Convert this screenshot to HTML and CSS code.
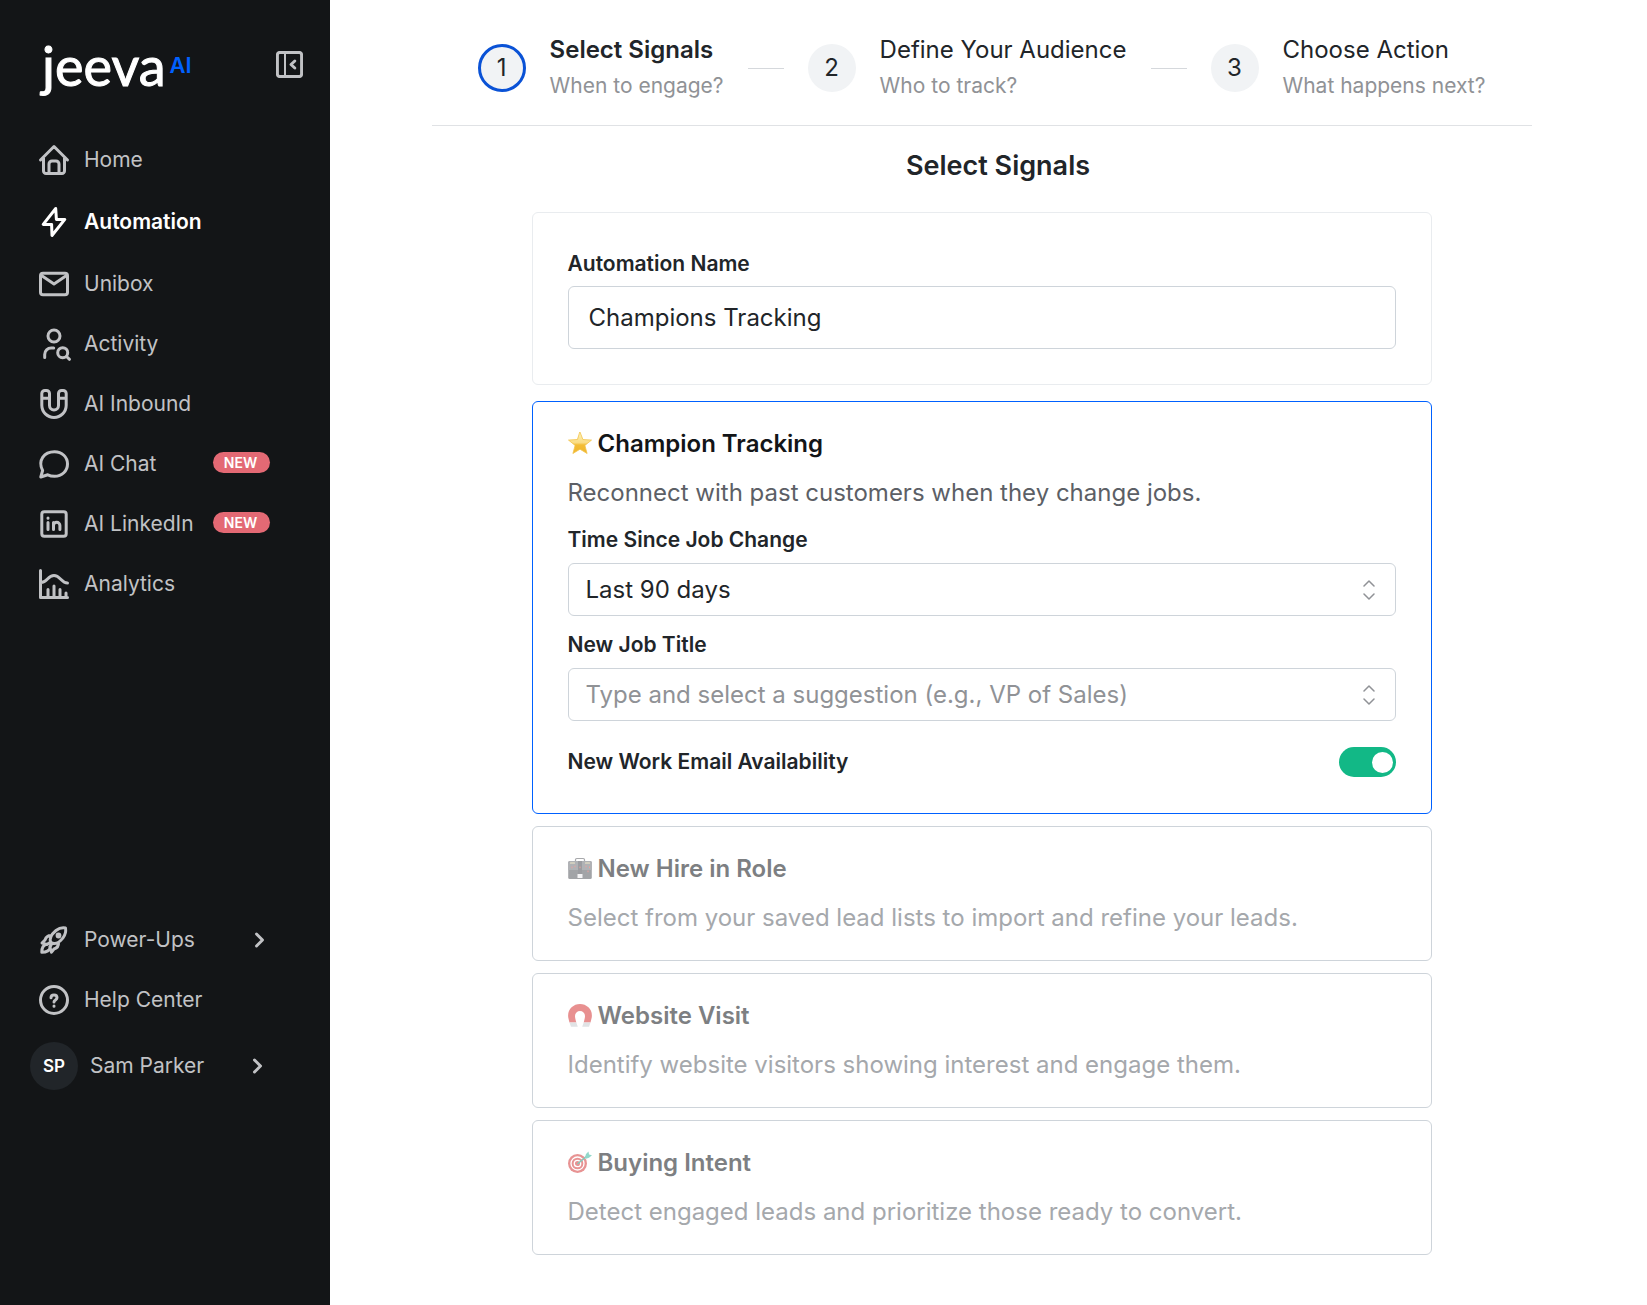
FILE: index.html
```html
<!DOCTYPE html>
<html lang="en">
<head>
	<meta charset="UTF-8">
	<meta name="viewport" content="width=device-width,initial-scale=1.0">
	<title>Jeeva AI - Automation</title>
	<link rel="stylesheet" href="styles.css">
</head>
<body>
	<div class="app">
		<aside class="sidebar">
			<header class="side-head">
				<a href="#" class="logo">jeeva<sup>AI</sup></a>
				<button type="button" class="collapse" aria-label="Collapse sidebar">
					<svg viewBox="0 0 27 27" width="27" height="27"><rect x="1.4" y="1.4" width="24.2" height="24.2" rx="2.5"/><path d="M9 2v23" stroke-width="2"/><path d="M18.8 10l-3.8 3.5 3.8 3.5"/></svg>
				</button>
			</header>
			<nav class="menu">
				<a href="#">
					<svg viewBox="0 0 30 30"><path d="M1.5 15L15 1.5 28.5 15M4.5 13v13A2.5 2.5 0 0 0 7 28.5h16a2.5 2.5 0 0 0 2.5-2.5V13M10 28V19a3 3 0 0 1 3-3h4a3 3 0 0 1 3 3v9"/></svg>
					<span>Home</span>
				</a>
				<a href="#" class="active">
					<svg viewBox="0 0 30 30"><path d="M16.7 1.5L4.2 17.4h8.4L13 28.5 25.8 12.4h-8.4z"/></svg>
					<span>Automation</span>
				</a>
				<a href="#">
					<svg viewBox="0 0 30 30"><rect x="1.5" y="4.2" width="27" height="21.6" rx="2.5"/><path d="M2.5 6.5L15 15l12.5-8.5"/></svg>
					<span>Unibox</span>
				</a>
				<a href="#">
					<svg viewBox="0 0 30 30"><circle cx="15" cy="7" r="6"/><path d="M5.7 28.5v-3a6.5 6.5 0 0 1 6.5-6.5h2.5M27.5 27.5l3 2.8"/><circle cx="23.7" cy="23.7" r="5"/></svg>
					<span>Activity</span>
				</a>
				<a href="#">
					<svg viewBox="0 0 30 30"><path d="M2.8 4.5a3 3 0 0 1 3-3h1.7a3 3 0 0 1 3 3v12a4.5 4.5 0 0 0 9 0v-12a3 3 0 0 1 3-3h1.7a3 3 0 0 1 3 3v11.800a12.200 12.200 0 0 1-24.400 0zM2.800 9.200h7.700M19.500 9.200h7.700"/></svg>
					<span>AI Inbound</span>
				</a>
				<a href="#">
					<svg viewBox="0 0 30 30"><path d="M1.800 28l1.800-6.500C-1.500 11.500 5 2.800 15.500 2.800c7.500 0 13 5.200 13 12.200s-5.500 12.200-13 12.200c-2.500 0-4.800-.5-6.700-1.400z"/></svg>
					<span>AI Chat</span>
					<em class="badge">NEW</em>
				</a>
				<a href="#">
					<svg viewBox="0 0 30 30"><rect x="2.8" y="2.8" width="24.4" height="24.4" rx="2.5"/><path d="M9 13.500v7M9 9v.2M14.500 20.500v-7M14.500 16.500a3.200 3.200 0 0 1 6.400 0v4"/></svg>
					<span>AI LinkedIn</span>
					<em class="badge">NEW</em>
				</a>
				<a href="#">
					<svg viewBox="0 0 30 30"><path d="M1.500 1.500v27h27M2 13.500c6.500 0 6.500-7 13-7s7 7.500 13.500 7.500M9 28v-7.500M15 28V17M21 28v-7.500M27 28v-4"/></svg>
					<span>Analytics</span>
				</a>
			</nav>
			<nav class="menu menu-bottom">
				<a href="#">
					<svg viewBox="0 0 30 30"><path d="M12 17.500C9.500 13 14 8 17 5.500c3-2.300 7-3 9.500-2.500.5 3-.2 6.800-2.500 9.800-2.500 3.200-7.500 7.700-12 4.700zM12.500 10.500c-4-.3-5.500 1.500-6.500 4.500L3 18l5 1.500M19.500 17.500c.3 4-1.500 5.500-4.500 6.500l-2.500 3.200L10.800 22M7.500 19.200c-3.200.8-4.700 3.300-4.700 8 4.700 0 7.700-1.700 8.500-4.900M11 17.500l-3 2M12.500 19l-1.500 3"/><circle cx="19.5" cy="10.5" r="1.4"/></svg>
					<span>Power-Ups</span>
					<svg class="chevron" viewBox="0 0 12 18"><path d="M2.500 3l6 6-6 6"/></svg>
				</a>
				<a href="#">
					<svg viewBox="0 0 30 30"><circle cx="15" cy="15" r="13.5"/><path d="M12 12.800c0-3.700 6-3.700 6 0 0 2.200-3 2-3 4.200M15 21v.3"/></svg>
					<span>Help Center</span>
				</a>
				<a href="#" class="user">
					<b class="avatar">SP</b>
					<span>Sam Parker</span>
					<svg class="chevron" viewBox="0 0 12 18"><path d="M2.500 3l6 6-6 6"/></svg>
				</a>
			</nav>
		</aside>

		<main class="main">
			<ol class="steps">
				<li class="step current">
					<span class="num">1</span>
					<div><strong>Select Signals</strong><small>When to engage?</small></div>
				</li>
				<li class="step">
					<span class="num">2</span>
					<div><strong>Define Your Audience</strong><small>Who to track?</small></div>
				</li>
				<li class="step">
					<span class="num">3</span>
					<div><strong>Choose Action</strong><small>What happens next?</small></div>
				</li>
			</ol>

			<form class="signals">
				<h1>Select Signals</h1>

				<section class="card name-card">
					<label for="name">Automation Name</label>
					<input type="text" id="name" class="name-input" value="Champions Tracking">
				</section>

				<section class="card signal selected">
					<h2>
						<svg viewBox="0 0 24 24">
							<defs><linearGradient id="gold" x1="0" y1="0" x2="0" y2="1"><stop offset="0" stop-color="#fff3b8"/><stop offset=".5" stop-color="#f9dc84"/><stop offset=".6" stop-color="#f3bd36"/><stop offset="1" stop-color="#f0b52d"/></linearGradient></defs>
							<path d="M12 0l2.900 7.500 8.600.6-6.600 5.300 2.200 8.100L12 17.200l-7.100 4.300 2.200-8.100L.5 8.100l8.600-.6z" fill="url(#gold)" stroke="#f2c44c" stroke-width=".8"/>
						</svg>
						Champion Tracking
					</h2>
					<p>Reconnect with past customers when they change jobs.</p>
					<div class="field">
						<label for="since">Time Since Job Change</label>
						<div class="select">
							<select id="since">
								<option>Last 30 days</option>
								<option selected>Last 90 days</option>
							</select>
							<svg viewBox="0 0 12 20"><path d="M1 6l5-5 5 5M1 14l5 5 5-5"/></svg>
						</div>
					</div>
					<div class="field">
						<label for="title">New Job Title</label>
						<div class="select">
							<input type="text" id="title" placeholder="Type and select a suggestion (e.g., VP of Sales)">
							<svg viewBox="0 0 12 20"><path d="M1 6l5-5 5 5M1 14l5 5 5-5"/></svg>
						</div>
					</div>
					<div class="toggle-row">
						<label for="email">New Work Email Availability</label>
						<input type="checkbox" id="email" class="toggle" checked>
					</div>
				</section>

				<section class="card signal muted">
					<h2>
						<svg viewBox="0 0 24 24">
							<path d="M7.500 4.500V2.800c0-.8.5-1.300 1.300-1.300h6.400c.8 0 1.300.5 1.300 1.300v1.700" fill="none" stroke="#6d6f75" stroke-width="1.200"/>
							<rect x=".2" y="4" width="23.600" height="18" rx="1.500" fill="#66686e"/>
							<path d="M.2 5.500A1.500 1.500 0 0 1 1.700 4h20.600a1.500 1.500 0 0 1 1.500 1.500V13H.2z" fill="#7d7f85"/>
							<path d="M10 4h4v13h-4z" fill="#5b5d63"/>
							<path d="M9.500 17h5v4h-5z" fill="#ececee"/>
							<path d="M2.500 6h4M17.500 6h4" stroke="#e6d9a5" stroke-width="1.200"/>
							<path d="M4 10v.8M18 9v.8M20 14v.8M7 9v.8M12 10v.8M21.500 10v.8" stroke="#e0655c" stroke-width="1"/>
						</svg>
						New Hire in Role
					</h2>
					<p>Select from your saved lead lists to import and refine your leads.</p>
				</section>

				<section class="card signal muted">
					<h2>
						<svg viewBox="0 0 24 24">
							<path d="M1.500 18.500C.7 15 .1 14 .1 11.500a11.900 11.500 0 0 1 23.800 0c0 2.500-.6 3.500-1.400 7h-6.800c.6-2.500 1.300-4.500 1.300-6.500a5 5 0 0 0-10 0c0 2 .7 4 1.300 6.500z" fill="#d94848"/>
							<path d="M1.500 18.500h6.800l1.500 4.300H3zM22.500 18.500h-6.800l-1.500 4.300H21z" fill="#cdd1d5"/>
						</svg>
						Website Visit
					</h2>
					<p>Identify website visitors showing interest and engage them.</p>
				</section>

				<section class="card signal muted">
					<h2>
						<svg viewBox="0 0 24 24">
							<circle cx="9.5" cy="12.500" r="9.5" fill="#d94d4d"/>
							<circle cx="9.5" cy="12.500" r="6.500" fill="none" stroke="#fff" stroke-width="1.300"/>
							<circle cx="9.5" cy="12.500" r="3.200" fill="none" stroke="#fff" stroke-width="1.300"/>
							<path d="M10 12.500l9-7.500" stroke="#35a58e" stroke-width="1.600"/>
							<path d="M17 6.500l1-3.500 2.500-2.500.5 3 3 .7-3 2.600-3 .9z" fill="#4bbfa7"/>
						</svg>
						Buying Intent
					</h2>
					<p>Detect engaged leads and prioritize those ready to convert.</p>
				</section>
			</form>
		</main>
	</div>
</body>
</html>
```

FILE: styles.css
```css
*{margin: 0; padding: 0; box-sizing: border-box;}
body{font-family: Inter, "Liberation Sans", sans-serif; font-size: 24px; line-height: 36px; color: #212529; background: #fff;}
a{text-decoration: none; color: inherit;}
input, select, button{font: inherit; color: inherit;}
svg{fill: none; stroke-linecap: round; stroke-linejoin: round; flex-shrink: 0;}

.app{display: flex; min-height: 100vh;}

/* sidebar */
.sidebar{width: 330px; flex-shrink: 0; padding: 36px 27px 0 30px; background: #131517; color: #c1c2c5; display: flex; flex-direction: column;}
.side-head{display: flex; justify-content: space-between; align-items: flex-start; height: 94px; padding-left: 12px;}
.logo{font-family: Lato, sans-serif; font-size: 54px; line-height: 60px; color: #fff; -webkit-text-stroke: 1px #fff; display: flex; align-items: flex-start;}
.logo sup{font: 600 22px/58px Inter, sans-serif; color: #0061ff; -webkit-text-stroke: 0; margin-left: 4px;}
.collapse{width: 27px; height: 27px; margin-top: 15px; border: 0; background: none; cursor: pointer;}
.collapse svg{display: block; stroke: #c1c2c5; stroke-width: 3;}

.menu{font-size: 21px; line-height: 30px;}
.menu a{display: flex; align-items: center; height: 60px; padding: 0 33px 0 9px;}
.menu a > svg{width: 30px; height: 30px; margin-right: 15px; stroke: currentColor; stroke-width: 3; overflow: visible;}
.menu a.active{height: 64px; color: #fff; font-weight: 600;}
.badge{margin: 0 0 4px auto; width: 57px; padding-right: 2px; border-radius: 11px; background: #e36974; color: #fff; font: 600 14px/21px Inter, sans-serif; text-align: center;}
.menu-bottom{margin-top: 296px;}
.menu a > .chevron{width: 12px; height: 18px; margin: 0 4px 0 auto; stroke-width: 3;}
.menu a.user{height: 72px; padding: 0 35px 0 0;}
.avatar{width: 48px; height: 48px; margin-right: 12px; border-radius: 50%; background: #212529; color: #fff; font-size: 17px; line-height: 48px; font-weight: 600; text-align: center;}

/* main */
.main{flex: 1; padding: 0 14px 24px 0;}
.steps{max-width: 1100px; margin: 0 auto; padding: 32px 0 21px; border-bottom: 1px solid #e0e2e5; list-style: none; display: flex; justify-content: center; gap: 24px;}
.step{display: flex; align-items: center; gap: 24px;}
.step + .step::before{content: ""; width: 36px; height: 1px; background: #d5d8dc;}
.num{width: 48px; height: 48px; border-radius: 50%; background: #f1f3f5; line-height: 48px; text-align: center;}
.current .num{border: 3px solid #0a52d6; line-height: 42px;}
.step strong, .step small{display: block; font-weight: 400;}
.step small{font-size: 21px; color: #909296;}
.current strong{font-weight: 600;}

.signals{max-width: 900px; margin: 0 auto;}
h1{padding: 22px 0 28px 33px; font-size: 27px; font-weight: 600; text-align: center;}
.card{padding: 35px; border: 1px solid #ced4da; border-radius: 6px;}
label{display: block; font-size: 21px; line-height: 32px; font-weight: 600;}
.card input, .card select{outline: 0; background: #fff;}
.name-card{border-color: #e9ecef; margin-bottom: 16px;}
.name-input{display: block; width: 100%; height: 63px; margin-top: 6px; padding: 0 20px; border: 1px solid #ced4da; border-radius: 6px;}

.signal{display: flex; flex-direction: column; gap: 13px; padding: 24px 35px; margin-bottom: 12px;}
.signal h2{display: flex; align-items: center; gap: 6px; font-size: 24px; font-weight: 600; color: #131517;}
.signal h2 svg{width: 24px; height: 24px;}
.signal p{color: #5c5f66;}
.selected{border-color: #0061ff; padding-bottom: 36px;}
.select{position: relative; margin-top: 7px;}
.select select, .select input{display: block; width: 100%; height: 53px; padding: 0 50px 0 17px; border: 1px solid #ced4da; border-radius: 6px; appearance: none;}
.select input::placeholder{color: #909296; opacity: 1;}
.select svg{position: absolute; right: 21px; top: 17px; width: 12px; height: 20px; stroke: #909296; stroke-width: 1.5; pointer-events: none;}
.toggle-row{display: flex; justify-content: space-between; align-items: center; height: 30px; margin-top: 13px;}
.card .toggle{appearance: none; width: 57px; height: 30px; padding: 5px 3px; border-radius: 15px; background: #12b886; display: flex; justify-content: flex-end; align-items: center; cursor: pointer;}
.toggle::before{content: ""; width: 21px; height: 21px; border-radius: 50%; background: #fff;}
.card .toggle:not(:checked){background: #ced4da; justify-content: flex-start;}
.muted h2{color: #7d7f82;}
.muted h2 svg{opacity: .6;}
.muted p{color: #a5a8ac;}
```
